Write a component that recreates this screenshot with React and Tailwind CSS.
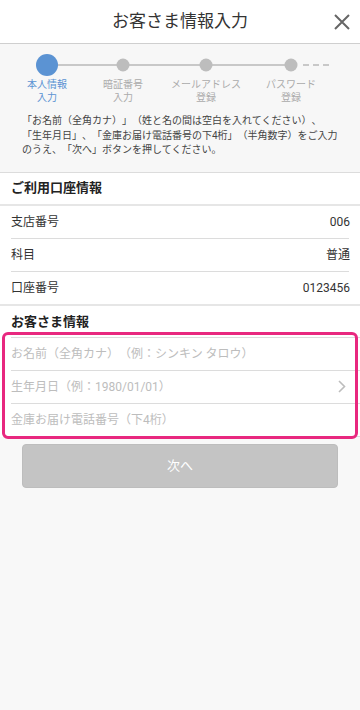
import React from "react";

const FONT = { fontFamily: '"Roboto","Noto Sans CJK JP","Noto Sans",sans-serif' };

function Row({ label, value }) {
  return (
    <div className="h-[32px] flex items-center justify-between pl-[11px] pr-[10px] text-[12px] text-[#333]">
      <span>{label}</span>
      <span>{value}</span>
    </div>
  );
}

function Input({ text, chevron }) {
  return (
    <div className="h-[32px] flex items-center justify-between pr-[14px] text-[12px] text-[#bdbdbd]">
      <span>{text}</span>
      {chevron && (
        <svg width="8" height="13" viewBox="0 0 8 13">
          <path d="M1 1 L6.5 6.5 L1 12" fill="none" stroke="#bdbdbd" strokeWidth="1.6" />
        </svg>
      )}
    </div>
  );
}

export default function App() {
  const steps = [
    { w: "w-[60px]", l1: "本人情報", l2: "入力", active: true },
    { w: "w-[92px]", l1: "暗証番号", l2: "入力" },
    { w: "w-[74px]", l1: "メールアドレス", l2: "登録" },
    { w: "w-[96px]", l1: "パスワード", l2: "登録" },
  ];
  return (
    <div className="w-full min-h-[710px] bg-[#f8f8f8] [text-spacing-trim:space-all]" style={FONT}>
      <header className="relative h-[44px] bg-white border-b border-[#cfcfcf] flex items-center justify-center">
        <h1 className="text-[17px] text-[#333]">お客さま情報入力</h1>
        <svg className="absolute right-[9px] top-[13px]" width="18" height="18" viewBox="0 0 18 18">
          <path d="M2 2 L16 16 M16 2 L2 16" stroke="#666" strokeWidth="2" />
        </svg>
      </header>

      <section className="bg-[#f7f7f7] pt-[9px] pb-[14px] border-b border-[#dcdcdc]">
        <svg width="360" height="24" viewBox="0 0 360 24" className="block">
          <line x1="47" y1="12" x2="291" y2="12" stroke="#c8c8c8" strokeWidth="2" />
          <line x1="303" y1="12" x2="333" y2="12" stroke="#c8c8c8" strokeWidth="2" strokeDasharray="6 4" />
          <circle cx="47" cy="12" r="11" fill="#5b93d3" />
          <circle cx="123" cy="12" r="6.5" fill="#bdbdbd" />
          <circle cx="206" cy="12" r="6.5" fill="#bdbdbd" />
          <circle cx="291" cy="12" r="6.5" fill="#bdbdbd" />
        </svg>
        <div className="flex pl-[17px] mt-[1px]">
          {steps.map((s) => (
            <div
              key={s.l1}
              className={`${s.w} flex flex-col items-center text-[10px] leading-[13px] ${s.active ? "text-[#5b93d3]" : "text-[#ababab]"}`}
            >
              <span>{s.l1}</span>
              <span>{s.l2}</span>
            </div>
          ))}
        </div>
        <p className="mt-[10px] px-[22px] text-[10px] leading-[14.5px] text-[#444] whitespace-nowrap">
          「お名前（全角カナ）」（姓と名の間は空白を入れてください）、
          <br />
          「生年月日」、「金庫お届け電話番号の下4桁」（半角数字）をご入力
          <br />
          のうえ、「次へ」ボタンを押してください。
        </p>
      </section>

      <section className="bg-white">
        <h2 className="h-[31px] flex items-center pl-[11px] text-[13px] font-bold text-[#222]">ご利用口座情報</h2>
        <div className="h-[2px] bg-[#e6e6e6]" />
        <Row label="支店番号" value="006" />
        <div className="mx-[11px] h-px bg-[#dcdcdc]" />
        <Row label="科目" value="普通" />
        <div className="mx-[11px] h-px bg-[#dcdcdc]" />
        <Row label="口座番号" value="0123456" />
        <div className="h-[2px] bg-[#e6e6e6]" />
        <h2 className="h-[31px] flex items-center pl-[11px] pt-[2px] text-[13px] font-bold text-[#222]">お客さま情報</h2>
        <div className="relative">
          <div className="pl-[11px]">
            <div className="h-px bg-[#dcdcdc]" />
            <Input text="お名前（全角カナ）（例：シンキン タロウ）" />
            <div className="h-px bg-[#dcdcdc]" />
            <Input text="生年月日（例：1980/01/01）" chevron />
            <div className="h-px bg-[#dcdcdc]" />
            <Input text="金庫お届け電話番号（下4桁）" />
            <div className="h-px bg-[#dcdcdc]" />
          </div>
          <div className="pointer-events-none absolute -top-[5px] left-[2px] right-[2px] -bottom-[2px] border-[3px] border-[#e8287f] rounded-[6px]" />
        </div>
      </section>

      <div className="px-[22px] pt-[7px]">
        <button className="w-full h-[44px] rounded-[4px] bg-[#c4c4c4] text-white text-[13px] border border-[#bdbdbd]">
          次へ
        </button>
      </div>
    </div>
  );
}
